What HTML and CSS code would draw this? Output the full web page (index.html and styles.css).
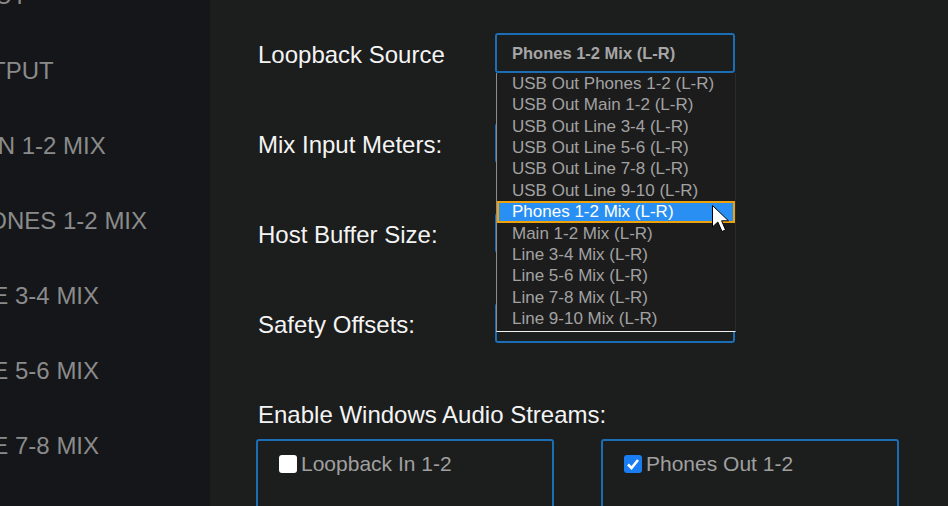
FILE: index.html
```html
<!DOCTYPE html>
<html>
<head>
<meta charset="utf-8">
<link rel="stylesheet" href="styles.css">
</head>
<body>
<div class="app">
  <nav class="sidebar">
    <ul class="nav-list">
      <li>INPUT</li>
      <li>OUTPUT</li>
      <li>MAIN 1-2 MIX</li>
      <li>PHONES 1-2 MIX</li>
      <li>LINE 3-4 MIX</li>
      <li>LINE 5-6 MIX</li>
      <li>LINE 7-8 MIX</li>
    </ul>
  </nav>
  <main class="main">
    <div class="fields">
      <div class="field">
        <label class="field-label">Loopback Source</label>
        <div class="select-wrap">
          <div class="select">Phones 1-2 Mix (L-R)</div>
          <ul class="popup">
            <li>USB Out Phones 1-2 (L-R)</li>
            <li>USB Out Main 1-2 (L-R)</li>
            <li>USB Out Line 3-4 (L-R)</li>
            <li>USB Out Line 5-6 (L-R)</li>
            <li>USB Out Line 7-8 (L-R)</li>
            <li>USB Out Line 9-10 (L-R)</li>
            <li class="active">Phones 1-2 Mix (L-R)</li>
            <li>Main 1-2 Mix (L-R)</li>
            <li>Line 3-4 Mix (L-R)</li>
            <li>Line 5-6 Mix (L-R)</li>
            <li>Line 7-8 Mix (L-R)</li>
            <li>Line 9-10 Mix (L-R)</li>
          </ul>
          <svg class="cursor" width="20" height="30" viewBox="0 0 20 30">
            <path d="M0.5 0.5 L0.5 22 L5.8 17 L10 26.5 L13.6 25 L9.6 15.8 L16.5 15.8 Z" fill="#fff" stroke="#000" stroke-width="1" stroke-linejoin="miter"/>
          </svg>
        </div>
      </div>
      <div class="field">
        <label class="field-label">Mix Input Meters:</label>
        <div class="select-wrap"><div class="select"></div></div>
      </div>
      <div class="field">
        <label class="field-label">Host Buffer Size:</label>
        <div class="select-wrap"><div class="select"></div></div>
      </div>
      <div class="field">
        <label class="field-label">Safety Offsets:</label>
        <div class="select-wrap"><div class="select"></div></div>
      </div>
    </div>
    <h2 class="section-title">Enable Windows Audio Streams:</h2>
    <div class="panels">
      <div class="panel">
        <div class="check-row"><span class="box"></span><span class="check-label">Loopback In 1-2</span></div>
        <div class="check-row"><span class="box checked"><svg width="18" height="18" viewBox="0 0 18 18"><path d="M4 9.5 L7.5 13 L14 5" fill="none" stroke="#fff" stroke-width="2.6"/></svg></span><span class="check-label">Loopback In 3-4</span></div>
      </div>
      <div class="panel">
        <div class="check-row"><span class="box checked"><svg width="18" height="18" viewBox="0 0 18 18"><path d="M4 9.5 L7.5 13 L14 5" fill="none" stroke="#fff" stroke-width="2.6"/></svg></span><span class="check-label">Phones Out 1-2</span></div>
        <div class="check-row"><span class="box checked"><svg width="18" height="18" viewBox="0 0 18 18"><path d="M4 9.5 L7.5 13 L14 5" fill="none" stroke="#fff" stroke-width="2.6"/></svg></span><span class="check-label">Main Out 1-2</span></div>
      </div>
    </div>
  </main>
</div>
</body>
</html>
```
FILE: styles.css
```css
html, body {
  margin: 0;
  padding: 0;
  background: #1c1d1d;
  font-family: "Liberation Sans", Arial, sans-serif;
}

.app {
  display: flex;
  width: 948px;
  height: 506px;
  overflow: hidden;
}

.sidebar {
  width: 210px;
  flex: 0 0 210px;
  background: #141619;
  overflow: hidden;
}

.nav-list {
  list-style: none;
  margin: -42px 0 0 -45px;
  padding: 0;
}

.nav-list li {
  font-size: 24px;
  line-height: 75px;
  height: 75px;
  color: #8b8b8b;
  white-space: nowrap;
}

.main {
  flex: 1;
  padding: 33px 0 0 48px;
}

.fields {
  display: flex;
  flex-direction: column;
  gap: 50px;
}

.field {
  display: flex;
  align-items: center;
  height: 40px;
}

.field-label {
  width: 237px;
  padding-top: 3px;
  font-size: 24px;
  line-height: 28px;
  color: #f4f4f4;
}

.select-wrap {
  position: relative;
  width: 240px;
  height: 40px;
}

.select {
  box-sizing: border-box;
  width: 240px;
  height: 40px;
  border: 2px solid #1b6db5;
  border-radius: 3px;
  padding-left: 15px;
  display: flex;
  align-items: center;
  font-size: 16.5px;
  font-weight: bold;
  color: #a6a6a6;
  background: #1c1d1d;
}

.popup {
  position: absolute;
  z-index: 5;
  top: 40px;
  left: 1px;
  width: 240px;
  box-sizing: border-box;
  margin: 0;
  padding: 0 0 1.5px 0;
  list-style: none;
  background: #1c1c1c;
  border-left: 1px solid #8c8c8c;
  border-right: 1px solid #2a2a2a;
  border-bottom: 1px solid #f2f2f2;
}

.popup li {
  box-sizing: border-box;
  height: 21.36px;
  line-height: 21.36px;
  padding-left: 15px;
  font-size: 17px;
  color: #a2a2a2;
  white-space: nowrap;
}

.popup li.active {
  background: #2a8ff2;
  color: #ffffff;
  outline: 2px solid #eda20c;
  outline-offset: -2px;
}

.cursor {
  position: absolute;
  z-index: 6;
  left: 217px;
  top: 172px;
}

.section-title {
  margin: 58px 0 0 0;
  font-size: 24px;
  font-weight: normal;
  line-height: 28px;
  color: #f4f4f4;
}

.panels {
  display: grid;
  grid-template-columns: 298px 298px;
  column-gap: 47px;
  margin: 10px 0 0 -2px;
}

.panel {
  box-sizing: border-box;
  height: 110px;
  border: 2px solid #1b6db5;
  border-radius: 3px;
  padding: 13px 0 0 21px;
  display: flex;
  flex-direction: column;
  gap: 33px;
}

.check-row {
  display: flex;
  align-items: center;
  gap: 4px;
  height: 19px;
}

.box {
  width: 18px;
  height: 18px;
  border-radius: 3px;
  background: #ffffff;
  flex: 0 0 18px;
  display: flex;
}

.box.checked {
  background: #1a7ef2;
}

.check-label {
  font-size: 21px;
  line-height: 19px;
  color: #a0a0a0;
  white-space: nowrap;
}
```
